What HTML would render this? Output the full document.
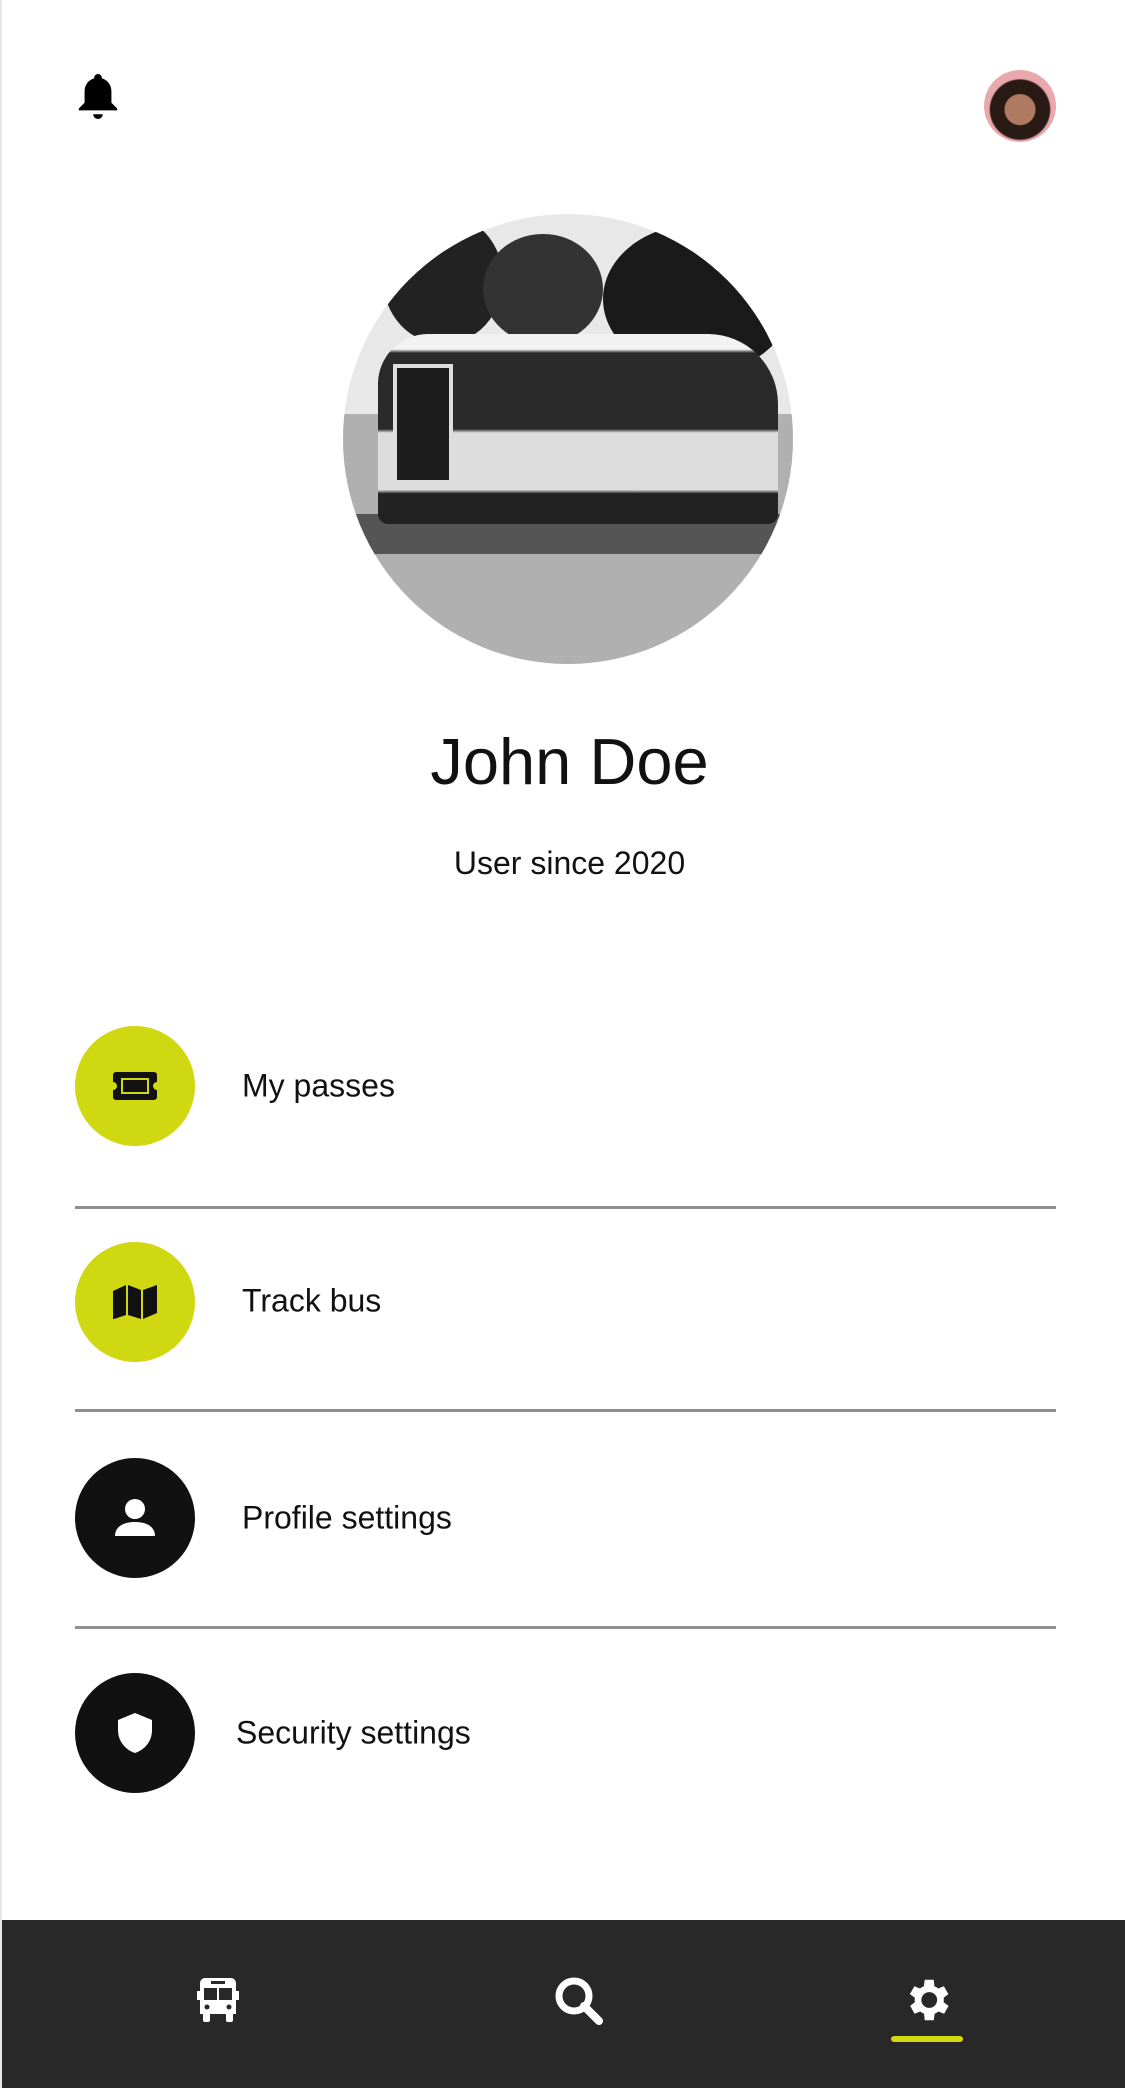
<!DOCTYPE html>
<html><head><meta charset="utf-8"><style>
*{margin:0;padding:0;box-sizing:border-box}
body{width:1125px;height:2088px;background:#fff;position:relative;overflow:hidden;font-family:"Liberation Sans",sans-serif;color:#111;border-left:2px solid #e6e6e6}
.abs{position:absolute}
.circ{position:absolute;left:73px;width:120px;height:120px;border-radius:50%;display:flex;align-items:center;justify-content:center}
.y{background:#d0d812}.k{background:#111}
.lbl{position:absolute;left:240px;font-size:32px;transform:translateY(-50%)}
.sep{position:absolute;left:73px;width:981px;height:3px;background:#8e8e8e}
</style></head><body>
<svg class="abs" style="left:73px;top:72px" width="46" height="50" viewBox="0 0 24 26"><path d="M12 1a2 2 0 0 0-2 2v.3C6.8 4.2 5 7 5 10v6l-3 3v1h20v-1l-3-3v-6c0-3-1.8-5.8-5-6.7V3a2 2 0 0 0-2-2zM9.5 22a2.5 2.5 0 0 0 5 0z" fill="#000"/></svg>
<div class="abs" style="left:982px;top:70px;width:72px;height:72px;border-radius:50%;background:radial-gradient(circle at 50% 55%,#b07a62 0 28%,#2a1a15 30% 55%,#e8a8ac 58%)"></div>
<div class="abs" style="left:341px;top:214px;width:450px;height:450px;border-radius:50%;overflow:hidden;background:#e8e8e8">
<div class="abs" style="left:40px;top:0;width:120px;height:130px;border-radius:50%;background:#222"></div>
<div class="abs" style="left:140px;top:20px;width:120px;height:110px;border-radius:50%;background:#333"></div>
<div class="abs" style="left:260px;top:10px;width:190px;height:150px;border-radius:50%;background:#1a1a1a"></div>
<div class="abs" style="left:0;top:200px;width:450px;height:260px;background:#b0b0b0"></div>
<div class="abs" style="left:0;top:300px;width:450px;height:40px;background:#555"></div>
<div class="abs" style="left:35px;top:120px;width:400px;height:190px;border-radius:50px 70px 10px 10px;background:linear-gradient(#f2f2f2 0 8%,#2a2a2a 10% 50%,#ddd 52% 82%,#222 84%)"></div>
<div class="abs" style="left:50px;top:150px;width:60px;height:120px;background:#1c1c1c;border:4px solid #ddd"></div>
</div>
<div class="abs" style="left:0;width:1125px;top:722px;text-align:center;font-size:65px;line-height:80px;padding-left:10px">John Doe</div>
<div class="abs" style="left:0;width:1125px;top:843px;text-align:center;font-size:32px;line-height:40px;padding-left:10px">User since 2020</div>

<div class="circ y" style="top:1026px"><svg width="44" height="28" viewBox="0 0 44 28"><path d="M3 0h38a3 3 0 0 1 3 3v7a4 4 0 0 0 0 8v7a3 3 0 0 1-3 3H3a3 3 0 0 1-3-3v-7a4 4 0 0 0 0-8V3a3 3 0 0 1 3-3z" fill="#111"/><rect x="9" y="7" width="26" height="14" fill="none" stroke="#d0d812" stroke-width="2"/></svg></div>
<div class="lbl" style="top:1086px">My passes</div>
<div class="sep" style="top:1206px"></div>
<div class="circ y" style="top:1242px"><svg width="44" height="34" viewBox="0 0 44 34"><path d="M0 6l13-6v30L1 34H0zM15 0l13 5v29l-13-4zM30 5l14-5v28l-14 6z" fill="#111"/></svg></div>
<div class="lbl" style="top:1301px">Track bus</div>
<div class="sep" style="top:1409px"></div>
<div class="circ k" style="top:1458px"><svg width="44" height="44" viewBox="0 0 44 44"><circle cx="22" cy="13" r="10" fill="#fff"/><path d="M2 40c0-9 8-14 20-14s20 5 20 14z" fill="#fff"/></svg></div>
<div class="lbl" style="top:1518px">Profile settings</div>
<div class="sep" style="top:1626px"></div>
<div class="circ k" style="top:1673px"><svg width="40" height="44" viewBox="0 0 40 44"><path d="M20 2L3 9v10c0 12 8 20 17 23 9-3 17-11 17-23V9z" fill="#fff"/></svg></div>
<div class="lbl" style="top:1733px;left:234px">Security settings</div>

<div class="abs" style="left:0;top:1920px;width:1125px;height:168px;background:#282828"></div>
<svg class="abs" style="left:195px;top:1978px" width="42" height="44" viewBox="0 0 42 44"><path d="M8 0h26a5 5 0 0 1 5 5v8h3v9h-3v14H3V22H0v-9h3V5a5 5 0 0 1 5-5z" fill="#fff"/><rect x="7" y="10" width="13" height="12" fill="#282828"/><rect x="22" y="10" width="13" height="12" fill="#282828"/><rect x="14" y="3" width="14" height="3" fill="#282828"/><circle cx="10" cy="29" r="2.5" fill="#282828"/><circle cx="32" cy="29" r="2.5" fill="#282828"/><rect x="6" y="34" width="7" height="10" rx="2" fill="#fff"/><rect x="29" y="34" width="7" height="10" rx="2" fill="#fff"/></svg>
<svg class="abs" style="left:552px;top:1976px" width="50" height="50" viewBox="0 0 50 50"><circle cx="20" cy="20" r="15" fill="none" stroke="#fff" stroke-width="7"/><path d="M30 30l15 15" stroke="#fff" stroke-width="8" stroke-linecap="round"/></svg>
<svg class="abs" style="left:898px;top:1973px" width="54" height="54" viewBox="0 0 24 24"><path fill="#fff" d="M19.4 13a7.5 7.5 0 0 0 0-2l2.1-1.6-2-3.5-2.5 1a7.6 7.6 0 0 0-1.7-1L15 3h-4l-.4 2.9a7.6 7.6 0 0 0-1.7 1l-2.5-1-2 3.5L6.6 11a7.5 7.5 0 0 0 0 2l-2.1 1.6 2 3.5 2.5-1c.5.4 1.1.7 1.7 1L11 21h4l.4-2.9c.6-.3 1.2-.6 1.7-1l2.5 1 2-3.5zM13 15.5a3.5 3.5 0 1 1 0-7 3.5 3.5 0 0 1 0 7z"/></svg>
<div class="abs" style="left:889px;top:2036px;width:72px;height:6px;border-radius:3px;background:#d0d812"></div>
</body></html>
